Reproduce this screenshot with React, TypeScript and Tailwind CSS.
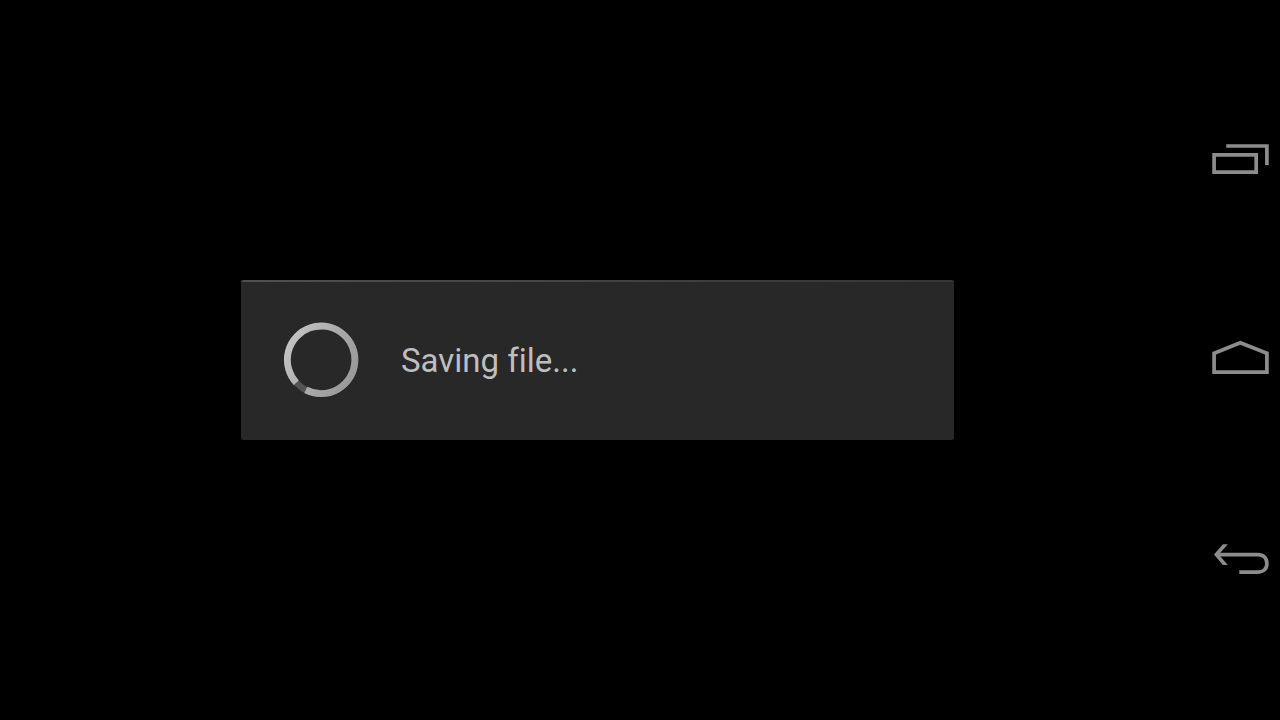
import type { ReactNode } from "react";

function NavButton({ label, children }: { label: string; children: ReactNode }) {
  return (
    <button
      type="button"
      aria-label={label}
      className="flex h-50 w-full cursor-pointer items-center justify-end"
    >
      <svg
        viewBox="0 0 80 60"
        className="h-15 w-20"
        fill="none"
        stroke="#8c8c8c"
        strokeWidth="3.7"
      >
        {children}
      </svg>
    </button>
  );
}

function Spinner() {
  return (
    <svg viewBox="0 0 80 80" className="size-20 shrink-0" fill="none" aria-hidden="true">
      <defs>
        <linearGradient id="ring" x1="0" y1="0.3" x2="1" y2="0.8">
          <stop offset="0" stopColor="#c2c2c2" />
          <stop offset="0.5" stopColor="#aaaaaa" />
          <stop offset="1" stopColor="#989898" />
        </linearGradient>
      </defs>
      <circle cx="40.2" cy="39.8" r="33.8" stroke="#545454" strokeWidth="6.4" />
      <path
        d="M15.3 62.7A33.8 33.8 0 1 1 24.8 69.9"
        stroke="url(#ring)"
        strokeWidth="6.8"
      />
    </svg>
  );
}

export default function App() {
  return (
    <div className="flex min-h-screen bg-black font-[Roboto,sans-serif]">
      <main className="flex flex-1 items-center justify-center">
        {/* Progress dialog */}
        <div
          role="dialog"
          aria-label="Saving file"
          className="w-full max-w-[713px] overflow-hidden rounded-[3px] bg-[#282828]"
        >
          <div className="h-0.5 bg-linear-to-r from-[#505050] to-[#353535]" />
          <div className="flex items-center gap-10 px-10 pt-[38px] pb-10">
            <Spinner />
            <p
              role="status"
              className="pt-0.5 text-[33px] leading-10 text-[#bebebe] [font-variant-ligatures:none]"
            >
              Saving file...
            </p>
          </div>
        </div>
      </main>

      {/* System bar */}
      <nav className="flex w-[85px] flex-col items-center justify-center">
        <NavButton label="Recent apps">
          <path d="M14.1 24.8H56.2V42.1H14.1Z" />
          <path d="M26.2 16H66.9V35" />
        </NavButton>
        <NavButton label="Home">
          <path d="M14.1 42.1V23.2L40.3 12.8L66.9 23.2V42.1Z" />
        </NavButton>
        <NavButton label="Back">
          <path
            d="M14 24.6L22.9 14.2H27.8L18.8 24.6L27.8 35H22.9Z"
            fill="#8c8c8c"
            stroke="none"
          />
          <path d="M17 24.6H57.6C63.4 24.6 66.9 28 66.9 33.4C66.9 38.8 63.4 42.1 57.6 42.1H39.3" />
        </NavButton>
      </nav>
    </div>
  );
}
